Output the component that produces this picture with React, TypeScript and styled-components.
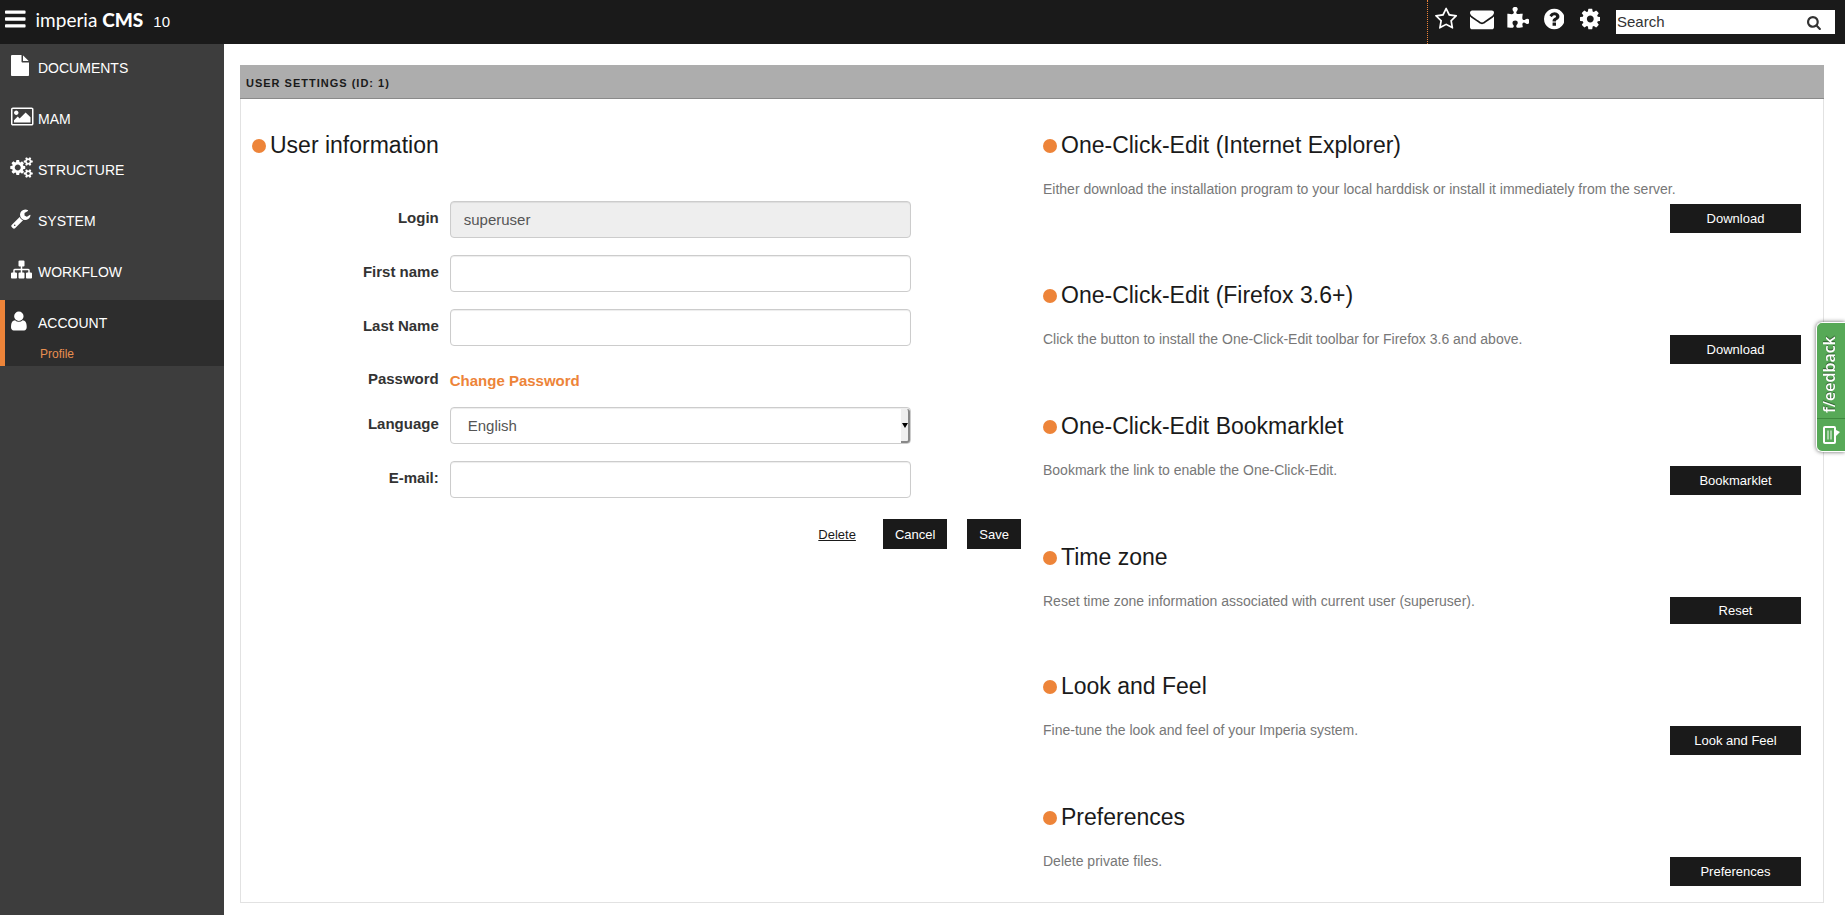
import React from "react";
import styled, { createGlobalStyle, css } from "styled-components";

const colors = {
  bar: "#1a1a1a",
  side: "#3d3d3d",
  sideActive: "#2d2d2d",
  accent: "#ed8439",
  text: "#333",
  muted: "#777",
};

const GlobalStyle = createGlobalStyle`
  *, *::before, *::after { box-sizing: border-box; }
  body {
    margin: 0;
    background: #fff;
    color: ${colors.text};
    font: 15px/21px "Liberation Sans", Arial, sans-serif;
  }
  button, input, select { font-family: inherit; }
  a { text-decoration: none; }
`;

/* ---------- icons ---------- */

const glyphs = {
  bars: "M1664 1344v128q0 26-19 45t-45 19h-1408q-26 0-45-19t-19-45v-128q0-26 19-45t45-19h1408q26 0 45 19t19 45zm0-512v128q0 26-19 45t-45 19h-1408q-26 0-45-19t-19-45v-128q0-26 19-45t45-19h1408q26 0 45 19t19 45zm0-512v128q0 26-19 45t-45 19h-1408q-26 0-45-19t-19-45v-128q0-26 19-45t45-19h1408q26 0 45 19t19 45z",
  star: "M1201 1004l306-297-422-62-189-382-189 382-422 62 306 297-73 421 378-199 377 199zm527-357q0 22-26 48l-363 354 86 500q1 7 1 20 0 50-41 50-19 0-40-12l-449-236-449 236q-22 12-40 12-21 0-31.5-14.5t-10.5-35.5q0-6 2-20l86-500-364-354q-25-27-25-48 0-37 56-46l502-73 225-455q19-41 49-41t49 41l225 455 502 73q56 9 56 46z",
  envelope: "M1792 710v794q0 66-47 113t-113 47h-1472q-66 0-113-47t-47-113v-794q44 49 101 87 362 246 497 345 57 42 92.5 65.5t94.5 48 110 24.5h2q51 0 110-24.5t94.5-48 92.5-65.5q170-123 498-345 57-39 100-87zm0-294q0 79-49 151t-122 123q-376 261-468 325-10 7-42.5 31t-54 38.5-52 32.5-57.5 27-50 9h-2q-23 0-50-9t-57.5-27-52-32.5-54-38.5-42.5-31q-91-64-262-182.5t-205-142.5q-62-42-117-115.5t-55-136.5q0-78 41.5-130t118.5-52h1472q65 0 112.5 47t47.5 113z",
  puzzle: "M1755 1083q0 81-44.5 135t-123.5 54q-41 0-77.5-17.5t-59-38-56.5-38-71-17.5q-110 0-110 124 0 39 16 115t15 115v5q-22 0-33 1-34 3-97.5 11.5t-115.5 13.5-98 5q-61 0-103-26.5t-42-83.5q0-37 17.5-71t38-56.5 38-59 17.5-77.5q0-79-54-123.5t-135-44.5q-84 0-143 45.5t-59 127.5q0 43 15 83t33.5 64.5 33.5 53 15 50.5q0 45-46 89-37 35-117 35-95 0-245-24-9-2-27.5-4t-27.5-4l-13-2q-1 0-3-1-2 0-2-1v-1024q2 1 17.5 3.5t34 5 21.5 3.5q150 24 245 24 80 0 117-35 46-44 46-89 0-22-15-50.5t-33.5-53-33.5-64.5-15-83q0-82 59-127.5t144-45.5q80 0 134 44.5t54 123.5q0 41-17.5 77.5t-38 59-38 56.5-17.5 71q0 57 42 83.5t103 26.5q64 0 180-15t163-17v2q-1 2-3.5 17.5t-5 34-3.5 21.5q-24 150-24 245 0 80 35 117 44 46 89 46 22 0 50.5-15t53-33.5 64.5-33.5 83-15q82 0 127.5 59t45.5 143z",
  question: "M1024 1376v-192q0-14-9-23t-23-9h-192q-14 0-23 9t-9 23v192q0 14 9 23t23 9h192q14 0 23-9t9-23zm256-672q0-88-55.5-163t-138.5-116-170-41q-243 0-371 213-15 24 8 42l132 100q7 6 19 6 16 0 25-12 53-68 86-92 34-24 86-24 48 0 85.5 26t37.5 59q0 38-20 61t-68 45q-63 28-115.5 86.5t-52.5 125.5v36q0 14 9 23t23 9h192q14 0 23-9t9-23q0-19 21.5-49.5t54.5-49.5q32-18 49-28.5t46-35 44.5-48 28-60.5 12.5-81zm384 192q0 209-103 385.5t-279.5 279.5-385.5 103-385.5-103-279.5-279.5-103-385.5 103-385.5 279.5-279.5 385.5-103 385.5 103 279.5 279.5 103 385.5z",
  cog: "M1152 896q0-106-75-181t-181-75-181 75-75 181 75 181 181 75 181-75 75-181zm512-109v222q0 12-8 23t-20 13l-185 28q-19 54-39 91 35 50 107 138 10 12 10 25t-9 23q-27 37-99 108t-94 71q-12 0-26-9l-138-108q-44 23-91 38-16 136-29 186-7 28-36 28h-222q-14 0-24.5-8.5t-11.5-21.5l-28-184q-49-16-90-37l-141 107q-10 9-25 9-14 0-25-11-126-114-165-168-7-10-7-23 0-12 8-23 15-21 51-66.5t54-70.5q-27-50-41-99l-183-27q-13-2-21-12.5t-8-23.5v-222q0-12 8-23t19-13l186-28q14-46 39-92-40-57-107-138-10-12-10-24 0-10 9-23 26-36 98.5-107.5t94.5-71.5q13 0 26 10l138 107q44-23 91-38 16-136 29-186 7-28 36-28h222q14 0 24.5 8.5t11.5 21.5l28 184q49 16 90 37l142-107q9-9 24-9 13 0 25 10 129 119 165 170 7 8 7 22 0 12-8 23-15 21-51 66.5t-54 70.5q26 50 41 98l183 28q13 2 21 12.5t8 23.5z",
  search: "M1216 832q0-185-131.5-316.5t-316.5-131.5-316.5 131.5-131.5 316.5 131.5 316.5 316.5 131.5 316.5-131.5 131.5-316.5zm512 832q0 52-38 90t-90 38q-54 0-90-38l-343-342q-179 124-399 124-143 0-273.5-55.5t-225-150-150-225-55.5-273.5 55.5-273.5 150-225 225-150 273.5-55.5 273.5 55.5 225 150 150 225 55.5 273.5q0 220-124 399l343 343q37 37 37 90z",
  file: "M1152 512v-472q22 14 36 28l408 408q14 14 28 36h-472zm-128 32q0 40 28 68t68 28h544v1056q0 40-28 68t-68 28h-1344q-40 0-68-28t-28-68v-1600q0-40 28-68t68-28h800v544z",
  picture: "M704 576q0 80-56 136t-136 56-136-56-56-136 56-136 136-56 136 56 56 136zm1024 384v448h-1408v-192l320-320 160 160 512-512zm96-704h-1600q-13 0-22.5 9.5t-9.5 22.5v1216q0 13 9.5 22.5t22.5 9.5h1600q13 0 22.5-9.5t9.5-22.5v-1216q0-13-9.5-22.5t-22.5-9.5zm160 32v1216q0 66-47 113t-113 47h-1600q-66 0-113-47t-47-113v-1216q0-66 47-113t113-47h1600q66 0 113 47t47 113z",
  cogs: "M832 896q0-106-75-181t-181-75-181 75-75 181 75 181 181 75 181-75 75-181zm768 512q0-52-38-90t-90-38-90 38-38 90q0 53 37.5 90.5t90.5 37.5 90.5-37.5 37.5-90.5zm0-1024q0-52-38-90t-90-38-90 38-38 90q0 53 37.5 90.5t90.5 37.5 90.5-37.5 37.5-90.5zm-384 421v185q0 10-7 19.5t-16 10.5l-155 24q-11 35-32 76 34 48 90 115 7 11 7 20 0 12-7 19-23 30-82.5 89.5t-78.5 59.5q-11 0-21-7l-115-90q-37 19-77 31-11 108-23 155-7 24-30 24h-186q-11 0-20-7.5t-10-17.5l-23-153q-34-10-75-31l-118 89q-7 7-20 7-11 0-21-8-144-133-144-160 0-9 7-19 10-14 41-53t47-61q-23-44-35-82l-152-24q-10-1-17-9.5t-7-19.5v-185q0-10 7-19.5t16-10.5l155-24q11-35 32-76-34-48-90-115-7-11-7-20 0-12 7-20 22-30 82-89t79-59q11 0 21 7l115 90q34-18 77-32 11-108 23-154 7-24 30-24h186q11 0 20 7.5t10 17.5l23 153q34 10 75 31l118-89q8-7 20-7 11 0 21 8 144 133 144 160 0 8-7 19-12 16-42 54t-45 60q23 48 34 82l152 23q10 2 17 10.5t7 19.5zm640 533v140q0 16-149 31-12 27-30 52 51 113 51 138 0 4-4 7-122 71-124 71-8 0-46-47t-52-68q-20 2-30 2t-30-2q-14 21-52 68t-46 47q-2 0-124-71-4-3-4-7 0-25 51-138-18-25-30-52-149-15-149-31v-140q0-16 149-31 13-29 30-52-51-113-51-138 0-4 4-7 4-2 35-20t59-34 30-16q8 0 46 46.5t52 67.5q20-2 30-2t30 2q51-71 92-112l6-2q4 0 124 70 4 3 4 7 0 25-51 138 17 23 30 52 149 15 149 31zm0-1024v140q0 16-149 31-12 27-30 52 51 113 51 138 0 4-4 7-122 71-124 71-8 0-46-47t-52-68q-20 2-30 2t-30-2q-14 21-52 68t-46 47q-2 0-124-71-4-3-4-7 0-25 51-138-18-25-30-52-149-15-149-31v-140q0-16 149-31 13-29 30-52-51-113-51-138 0-4 4-7 4-2 35-20t59-34 30-16q8 0 46 46.5t52 67.5q20-2 30-2t30 2q51-71 92-112l6-2q4 0 124 70 4 3 4 7 0 25-51 138 17 23 30 52 149 15 149 31z",
  wrench: "M448 1472q0-26-19-45t-45-19-45 19-19 45 19 45 45 19 45-19 19-45zm644-420l-682 682q-37 37-90 37-52 0-91-37l-106-108q-38-36-38-90 0-53 38-91l681-681q39 98 114.5 173.5t173.5 114.5zm634-435q0 39-23 106-47 134-164.5 217.5t-258.5 83.5q-185 0-316.5-131.5t-131.5-316.5 131.5-316.5 316.5-131.5q58 0 121.5 16.5t107.5 46.5q16 11 16 28t-16 28l-293 169v224l193 107q5-3 79-48.5t135.5-81 70.5-35.5q15 0 23.5 10t8.5 25z",
  sitemap: "M1792 1248v320q0 40-28 68t-68 28h-320q-40 0-68-28t-28-68v-320q0-40 28-68t68-28h96v-192h-512v192h96q40 0 68 28t28 68v320q0 40-28 68t-68 28h-320q-40 0-68-28t-28-68v-320q0-40 28-68t68-28h96v-192h-512v192h96q40 0 68 28t28 68v320q0 40-28 68t-68 28h-320q-40 0-68-28t-28-68v-320q0-40 28-68t68-28h96v-192q0-52 38-90t90-38h512v-192h-96q-40 0-68-28t-28-68v-320q0-40 28-68t68-28h320q40 0 68 28t28 68v320q0 40-28 68t-68 28h-96v192h512q52 0 90 38t38 90v192h96q40 0 68 28t28 68z",
  user: "M1536 1399q0 109-62.5 187t-150.5 78h-854q-88 0-150.5-78t-62.5-187q0-85 8.5-160.5t31.5-152 58.5-131 94-89 134.5-34.5q131 128 313 128t313-128q76 0 134.5 34.5t94 89 58.5 131 31.5 152 8.5 160.5zm-256-887q0 159-112.5 271.5t-271.5 112.5-271.5-112.5-112.5-271.5 112.5-271.5 271.5-112.5 271.5 112.5 112.5 271.5z",
};

type GlyphName = keyof typeof glyphs;

/* Left edge and width of each glyph inside the 1792-unit em square. */
const boxes: Partial<Record<GlyphName, [number, number]>> = {
  bars: [128, 1536],
  star: [64, 1664],
  puzzle: [64, 1692],
  question: [128, 1536],
  cog: [128, 1536],
  search: [64, 1664],
  file: [128, 1536],
  picture: [64, 1920],
  cogs: [0, 1920],
  wrench: [64, 1664],
  user: [256, 1280],
};

function Icon({ name, size }: { name: GlyphName; size: number }) {
  const [left, width] = boxes[name] ?? [0, 1792];
  return (
    <svg
      height={size}
      width={(size * width) / 1792}
      viewBox={`${left} 0 ${width} 1792`}
      fill="currentColor"
      aria-hidden="true"
    >
      <path d={glyphs[name]} />
    </svg>
  );
}

/* ---------- top bar ---------- */

const TopBar = styled.header`
  display: flex;
  align-items: flex-start;
  height: 44px;
  padding-right: 10px;
  background: ${colors.bar};
  color: #fff;
`;

const IconButton = styled.button`
  display: flex;
  padding: 0;
  border: 0;
  background: none;
  color: inherit;
  cursor: pointer;
`;

const MenuButton = styled(IconButton)`
  margin: 7px 0 0 5px;
`;

const Brand = styled.a`
  margin: 8px 0 0 10px;
  color: #fff;
  font: 19px/24px Lato, "Open Sans", sans-serif;

  strong {
    font-weight: 900;
  }
`;

const Version = styled.span`
  margin: 11px 0 0 10px;
  line-height: 22px;
  font-size: 15px;
`;

const Tools = styled.nav`
  display: flex;
  height: 44px;
  margin-left: auto;
  padding-top: 7px;
  border-left: 1px dotted ${colors.accent};
`;

const Tool = styled(IconButton)`
  width: 36px;
  height: 24px;
  justify-content: center;
`;

const SearchForm = styled.form`
  display: flex;
  align-items: center;
  width: 219px;
  height: 24px;
  margin: 10px 0 0 8px;
  padding-right: 14px;
  background: #fff;
  color: #333;
`;

const SearchInput = styled.input`
  flex: 1;
  min-width: 0;
  height: 22px;
  margin-bottom: 2px;
  padding: 0 1px;
  border: 0;
  outline: 0;
  background: none;
  font-size: 15px;

  &::placeholder {
    color: #333;
    opacity: 1;
  }
`;

/* ---------- side navigation ---------- */

const Body = styled.div`
  display: flex;
  min-height: calc(100vh - 44px);
`;

const Sidebar = styled.nav`
  flex: 0 0 224px;
  padding-top: 1px;
  background: ${colors.side};
`;

const NavList = styled.ul`
  margin: 0;
  padding: 0;
  list-style: none;
`;

const NavItem = styled.li<{ $active?: boolean }>`
  ${(p) =>
    p.$active &&
    css`
      padding-bottom: 3px;
      background: ${colors.sideActive};
      box-shadow: inset 5px 0 0 ${colors.accent};
    `}
`;

const NavLink = styled.a`
  display: flex;
  height: 51px;
  padding: 10px 0 0 11px;
  color: #fff;
  font-size: 14px;

  svg {
    flex: none;
    overflow: visible;
  }
`;

const NavIcon = styled.span`
  display: flex;
  flex: 0 0 27px;
`;

const NavText = styled.span`
  padding-top: 2px;
  line-height: 22px;
`;

const SubLink = styled.a`
  display: block;
  height: 12px;
  margin-left: 40px;
  color: #e88f50;
  font-size: 12px;
  line-height: 6px;
`;

/* ---------- panel ---------- */

const Main = styled.main`
  flex: 1;
  min-width: 0;
  padding: 21px 21px 12px 16px;
`;

const PanelTitle = styled.h1`
  margin: 0;
  padding: 0 6px;
  height: 34px;
  border-bottom: 1px solid #8a8a8a;
  background: #adadad;
  color: ${colors.bar};
  font-size: 11px;
  line-height: 36px;
  letter-spacing: 1px;
  text-transform: uppercase;
`;

const PanelBody = styled.div`
  display: flex;
  padding: 31px 0 16px;
  border: 1px solid #e2e2e2;
  border-top: 0;
`;

const Column = styled.div`
  flex: 1 1 50%;
  min-width: 0;
  padding: 0 11px;
`;

const Heading = styled.h2`
  display: flex;
  align-items: center;
  gap: 4px;
  margin: 0;
  color: ${colors.bar};
  font-size: 23px;
  font-weight: 400;
  line-height: 30px;

  &::before {
    content: "";
    width: 14px;
    height: 14px;
    margin-top: 2px;
    border-radius: 50%;
    background: ${colors.accent};
  }
`;

/* ---------- form ---------- */

const Form = styled.form`
  margin: 41px -11px 0;
`;

const Row = styled.div`
  display: flex;
  gap: 11px;
  margin-bottom: 17px;
`;

const rowLabel = css`
  flex: 0 0 25%;
  padding-top: 6px;
  color: ${colors.text};
  font-weight: 700;
  text-align: right;
`;

const Label = styled.label`
  ${rowLabel}
`;

const RowTitle = styled.span`
  ${rowLabel}
  padding-top: 5px;
`;

const Field = styled.div`
  position: relative;
  flex: 0 0 calc(100% * 7 / 12);
`;

const control = css`
  display: block;
  width: 100%;
  height: 37px;
  border: 1px solid #ccc;
  border-radius: 4px;
  background: #fff;
  box-shadow: inset 0 1px 1px rgba(0, 0, 0, 0.075);
  color: #555;
  font-size: 15px;
`;

const TextInput = styled.input`
  ${control}
  padding: 0 13px;

  &:disabled {
    background: #eee;
  }
`;

const Select = styled.select`
  ${control}
  padding: 0 17px;
  appearance: none;
`;

const SelectArrow = styled.span`
  position: absolute;
  top: 2px;
  right: 1px;
  bottom: 1px;
  display: flex;
  align-items: center;
  justify-content: center;
  width: 9px;
  border-right: 2px solid #888;
  border-bottom: 2px solid #888;
  border-radius: 0 3px 3px 0;
  background: #efefef;
  pointer-events: none;

  &::before {
    content: "";
    border: 3px solid transparent;
    border-top: 5px solid #000;
    border-bottom: 0;
  }
`;

const PasswordRow = styled(Row)`
  height: 27px;
`;

const ChangeLink = styled.a`
  padding-top: 7px;
  color: ${colors.accent};
  font-weight: 700;
`;

const Actions = styled.div`
  display: flex;
  align-items: center;
  justify-content: flex-end;
  gap: 20px;
  padding: 4px 11px 0 0;
`;

const buttonHeights = { form: 30, section: 29, short: 27 };

const Button = styled.button<{ $kind: keyof typeof buttonHeights }>`
  height: ${(p) => buttonHeights[p.$kind]}px;
  min-width: ${(p) => (p.$kind === "form" ? 0 : 131)}px;
  padding: 0 12px;
  border: 0;
  background: ${colors.bar};
  color: #fff;
  font-size: 13px;
  cursor: pointer;
`;

const DeleteLink = styled.a`
  margin-right: 7px;
  color: ${colors.bar};
  font-size: 13px;
  text-decoration: underline;
`;

/* ---------- tools column ---------- */

const Section = styled.section`
  & + & {
    margin-top: 47px;
  }
`;

const SectionRow = styled.div`
  display: flex;
  flex-wrap: wrap;
  align-items: flex-start;
  margin-top: 20px;
  padding-right: 11px;

  ${Button} {
    margin: 5px 0 0 auto;
  }
`;

const Description = styled.p`
  margin: 0;
  color: ${colors.muted};
  font-size: 14px;
  line-height: 19px;
`;

/* ---------- feedback tab ---------- */

const FeedbackTab = styled.button`
  position: fixed;
  top: 322px;
  right: 0;
  display: flex;
  flex-direction: column;
  align-items: flex-start;
  width: 29px;
  padding: 0;
  border: 1px solid #fff;
  border-right: 0;
  border-radius: 6px 0 0 6px;
  background: #57a957;
  box-shadow: 0 0 4px rgba(0, 0, 0, 0.6);
  color: #fff;
  cursor: pointer;
`;

const FeedbackText = styled.span`
  height: 95px;
  padding: 2px 0 10px;
  writing-mode: vertical-rl;
  transform: rotate(180deg);
  font: 600 16px/25px "Open Sans", sans-serif;
  text-align: center;
  text-shadow: 1px 0 1px rgba(0, 0, 0, 0.5);
`;

const FeedbackIcon = styled.span`
  display: flex;
  justify-content: center;
  align-items: center;
  width: 100%;
  height: 33px;
  border-top: 1px solid #3f8a3f;
`;

const navigation: { label: string; icon: GlyphName }[] = [
  { label: "DOCUMENTS", icon: "file" },
  { label: "MAM", icon: "picture" },
  { label: "STRUCTURE", icon: "cogs" },
  { label: "SYSTEM", icon: "wrench" },
  { label: "WORKFLOW", icon: "sitemap" },
];

const tools: { label: string; icon: GlyphName }[] = [
  { label: "Favorites", icon: "star" },
  { label: "Messages", icon: "envelope" },
  { label: "Plugins", icon: "puzzle" },
  { label: "Help", icon: "question" },
  { label: "Settings", icon: "cog" },
];

const sections: { title: string; text: string; action: string; short?: boolean }[] = [
  {
    title: "One-Click-Edit (Internet Explorer)",
    text: "Either download the installation program to your local harddisk or install it immediately from the server.",
    action: "Download",
  },
  {
    title: "One-Click-Edit (Firefox 3.6+)",
    text: "Click the button to install the One-Click-Edit toolbar for Firefox 3.6 and above.",
    action: "Download",
  },
  {
    title: "One-Click-Edit Bookmarklet",
    text: "Bookmark the link to enable the One-Click-Edit.",
    action: "Bookmarklet",
  },
  {
    title: "Time zone",
    text: "Reset time zone information associated with current user (superuser).",
    action: "Reset",
    short: true,
  },
  {
    title: "Look and Feel",
    text: "Fine-tune the look and feel of your Imperia system.",
    action: "Look and Feel",
  },
  { title: "Preferences", text: "Delete private files.", action: "Preferences" },
];

export default function App() {
  return (
    <>
      <GlobalStyle />
      <TopBar>
        <MenuButton aria-label="Menu">
          <Icon name="bars" size={24} />
        </MenuButton>
        <Brand href="#">
          imperia <strong>CMS</strong>
        </Brand>
        <Version>10</Version>
        <Tools>
          {tools.map((t) => (
            <Tool key={t.label} aria-label={t.label}>
              <Icon name={t.icon} size={24} />
            </Tool>
          ))}
        </Tools>
        <SearchForm>
          <SearchInput aria-label="Search" placeholder="Search" />
          <IconButton type="button" aria-label="Start search">
            <Icon name="search" size={15} />
          </IconButton>
        </SearchForm>
      </TopBar>

      <Body>
        <Sidebar>
          <NavList>
            {navigation.map((n) => (
              <NavItem key={n.label}>
                <NavLink href="#">
                  <NavIcon>
                    <Icon name={n.icon} size={21} />
                  </NavIcon>
                  <NavText>{n.label}</NavText>
                </NavLink>
              </NavItem>
            ))}
            <NavItem $active>
              <NavLink href="#">
                <NavIcon>
                  <Icon name="user" size={22} />
                </NavIcon>
                <NavText>ACCOUNT</NavText>
              </NavLink>
              <SubLink href="#">Profile</SubLink>
            </NavItem>
          </NavList>
        </Sidebar>

        <Main>
          <PanelTitle>User settings (ID: 1)</PanelTitle>
          <PanelBody>
            <Column>
              <Heading>User information</Heading>
              <Form>
                <Row>
                  <Label htmlFor="login">Login</Label>
                  <Field>
                    <TextInput id="login" defaultValue="superuser" disabled />
                  </Field>
                </Row>
                <Row>
                  <Label htmlFor="first">First name</Label>
                  <Field>
                    <TextInput id="first" />
                  </Field>
                </Row>
                <Row>
                  <Label htmlFor="last">Last Name</Label>
                  <Field>
                    <TextInput id="last" />
                  </Field>
                </Row>
                <PasswordRow>
                  <RowTitle>Password</RowTitle>
                  <ChangeLink href="#">Change Password</ChangeLink>
                </PasswordRow>
                <Row>
                  <Label htmlFor="language">Language</Label>
                  <Field>
                    <Select id="language" defaultValue="en">
                      <option value="en">English</option>
                      <option value="de">German</option>
                    </Select>
                    <SelectArrow />
                  </Field>
                </Row>
                <Row>
                  <Label htmlFor="email">E-mail:</Label>
                  <Field>
                    <TextInput id="email" type="email" />
                  </Field>
                </Row>
                <Actions>
                  <DeleteLink href="#">Delete</DeleteLink>
                  <Button type="button" $kind="form">
                    Cancel
                  </Button>
                  <Button type="button" $kind="form">
                    Save
                  </Button>
                </Actions>
              </Form>
            </Column>

            <Column>
              {sections.map((s) => (
                <Section key={s.title}>
                  <Heading>{s.title}</Heading>
                  <SectionRow>
                    <Description>{s.text}</Description>
                    <Button type="button" $kind={s.short ? "short" : "section"}>
                      {s.action}
                    </Button>
                  </SectionRow>
                </Section>
              ))}
            </Column>
          </PanelBody>
        </Main>
      </Body>

      <FeedbackTab type="button">
        <FeedbackText>f/eedback</FeedbackText>
        <FeedbackIcon>
          <svg width="18" height="20" viewBox="0 0 18 20" fill="none" stroke="#fff" aria-hidden="true">
            <rect x="2" y="2" width="11" height="16" rx="1" strokeWidth="2" />
            <path d="M14 5v6l4-4z" fill="#fff" stroke="none" />
            <path d="M6 5.500v9M9 5.500v9" strokeWidth="1" />
          </svg>
        </FeedbackIcon>
      </FeedbackTab>
    </>
  );
}
